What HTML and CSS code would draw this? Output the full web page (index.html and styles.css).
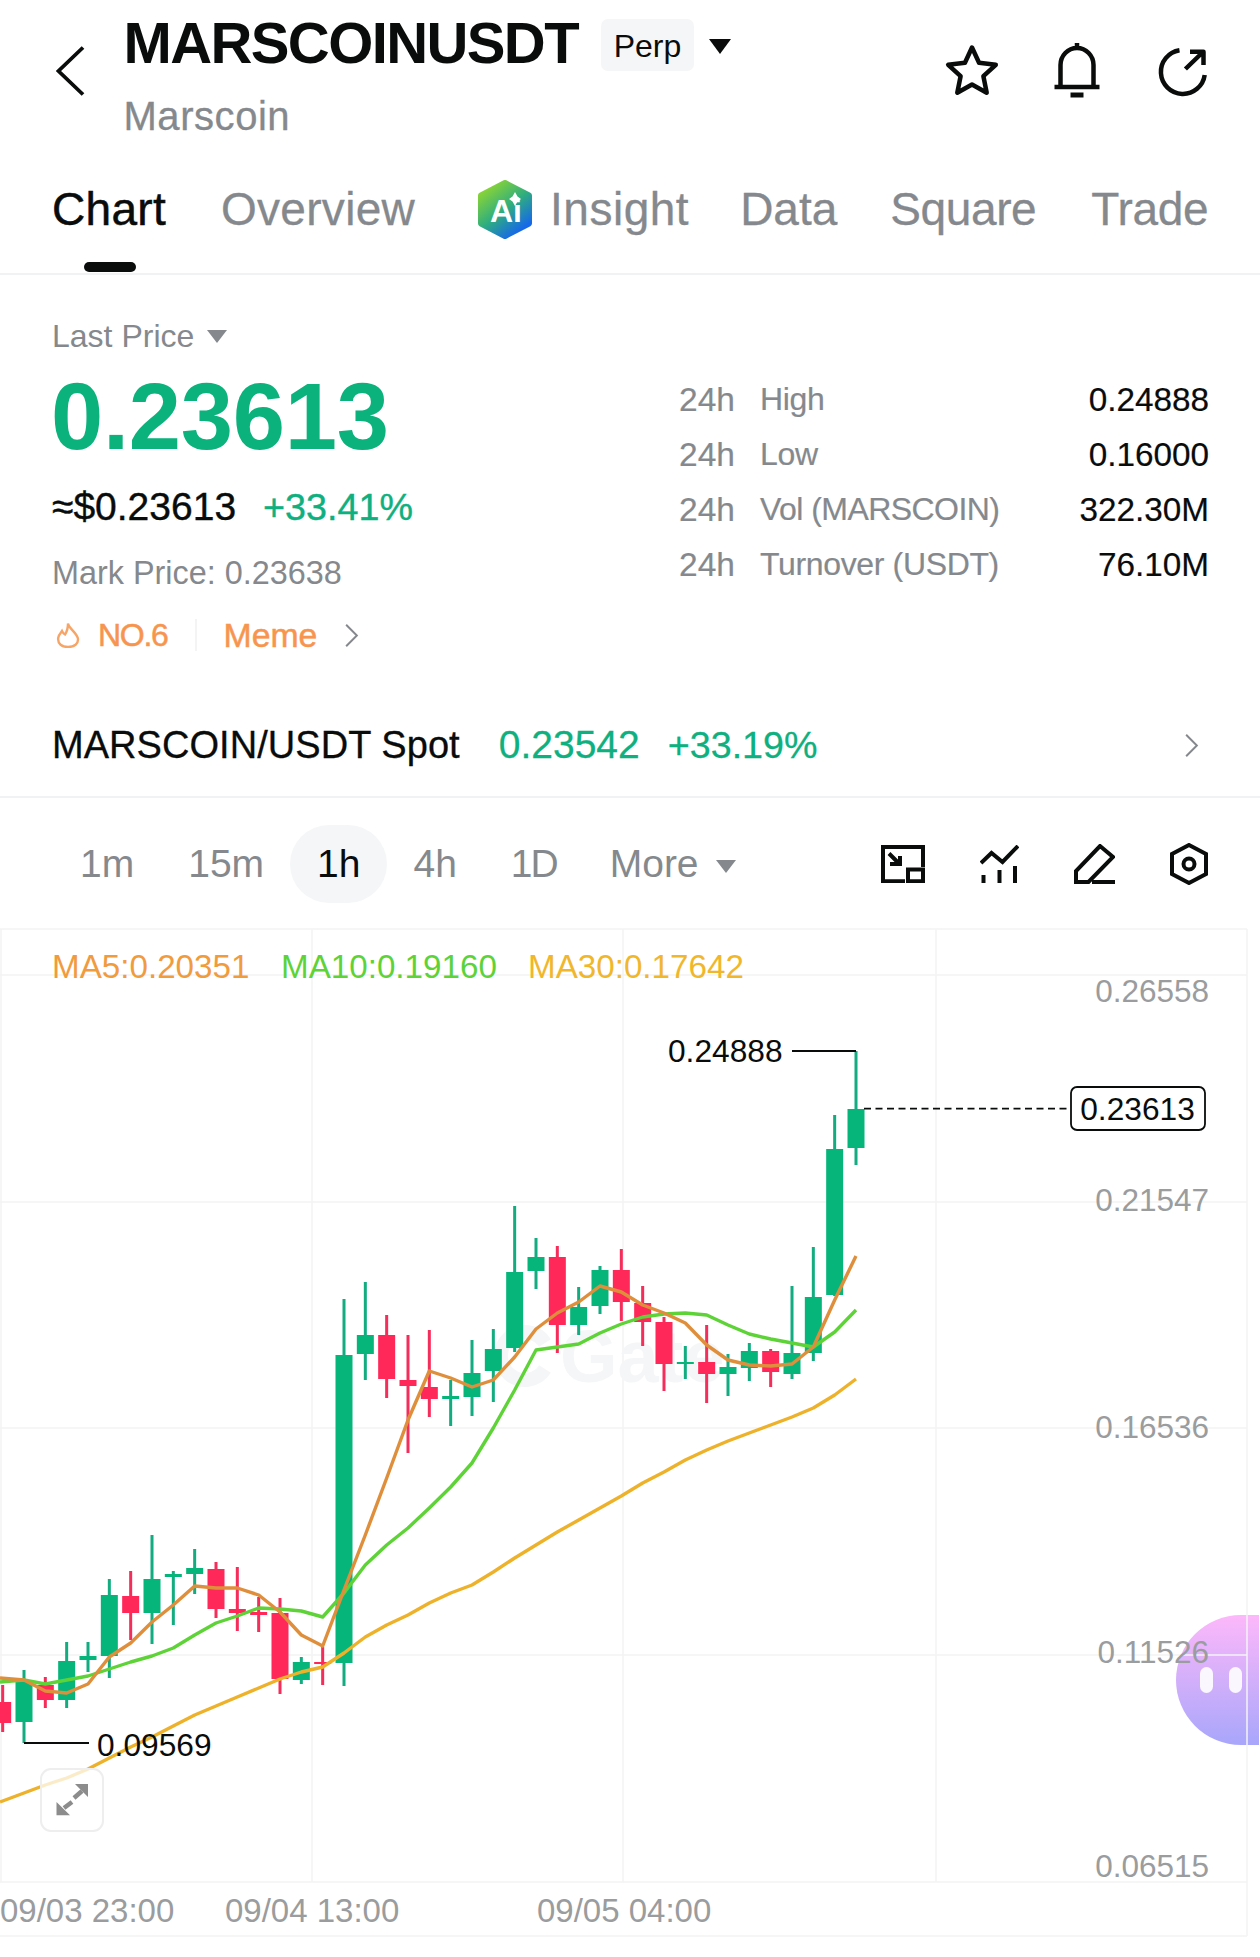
FILE: index.html
```html
<!DOCTYPE html>
<html lang="en">
<head>
<meta charset="utf-8">
<title>MARSCOINUSDT</title>
<link rel="stylesheet" href="styles.css">
</head>
<body>
<div class="page">
  <header class="header">
    <svg class="back" viewBox="0 0 30 52"><path d="M27 2.500 2.500 26 27 49.500"/></svg>
    <div class="heading">
      <div class="title-row">
        <h1 class="title">MARSCOINUSDT</h1>
        <span class="badge">Perp</span>
        <span class="tri tri-black"></span>
      </div>
      <div class="subtitle">Marscoin</div>
    </div>
    <div class="top-actions">
      <svg class="action" viewBox="0 0 60 60"><path d="M30 6.500 37.050 21.800 53.800 23.800 41.400 35.200 44.700 51.700 30 43.500 15.300 51.700 18.600 35.200 6.200 23.800 22.950 21.800Z"/></svg>
      <svg class="action" viewBox="0 0 60 60"><path d="M13.500 46V24a16.500 17 0 0 1 33 0V46M30 2V7M7.500 46h45"/><path class="thick" d="M23.500 54h13"/></svg>
      <svg class="action" viewBox="0 0 60 60"><path d="M27.500 9.200A22 22 0 1 0 52.700 34M33.400 28 51 11M38 10.700H51.500V24"/></svg>
    </div>
  </header>

  <nav class="tabs">
    <span class="tab tab-active">Chart</span>
    <span class="tab tab-overview">Overview</span>
    <span class="tab tab-ai">
      <svg class="ai-logo" viewBox="0 0 54 59">
        <defs>
          <linearGradient id="aiGrad" x1="0.150" y1="0.100" x2="0.750" y2="0.950">
            <stop offset="0" stop-color="#84d23a"/>
            <stop offset="0.500" stop-color="#2fae7e"/>
            <stop offset="1" stop-color="#1668ea"/>
          </linearGradient>
        </defs>
        <path class="ai-hex" d="M27 3 51 15.500V43.500L27 56 3 43.500V15.500Z"/>
        <text class="ai-text" x="12" y="42">Ai</text>
        <path class="ai-spark" d="M37 12 39.500 16.500 43 19 39.500 21.500 37 26 34.500 21.500 31 19 34.500 16.500Z"/>
      </svg>
      <span class="ai-label">Insight</span>
    </span>
    <span class="tab tab-data">Data</span>
    <span class="tab tab-square">Square</span>
    <span class="tab tab-trade">Trade</span>
  </nav>

  <section class="market">
    <div class="market-left">
      <div class="last-price">Last Price <span class="tri tri-gray"></span></div>
      <div class="big-price">0.23613</div>
      <div class="usd-row"><span class="usd">≈$0.23613</span><span class="pct">+33.41%</span></div>
      <div class="mark">Mark Price: 0.23638</div>
      <div class="tags">
        <svg class="flame" viewBox="0 0 24 26"><path d="M12 1.500C13 6.500 20 10 21.800 16 23 22 18 25 12 25 6 25 1.500 22 2.200 16 2.600 12.500 5 10.500 6 9 7 11 8 12 9 12.500 11 9.500 12 5.500 12 1.500Z"/></svg>
        <span class="tag-rank">NO.6</span>
        <span class="tag-divider"></span>
        <span class="tag-name">Meme</span>
        <svg class="chev tag-chev" viewBox="0 0 16 28"><path d="M2 2 14 14 2 26"/></svg>
      </div>
    </div>
    <dl class="stats">
      <div class="stat"><dt class="stat-period">24h</dt><dt class="stat-label">High</dt><dd class="stat-value">0.24888</dd></div>
      <div class="stat"><dt class="stat-period">24h</dt><dt class="stat-label">Low</dt><dd class="stat-value">0.16000</dd></div>
      <div class="stat"><dt class="stat-period">24h</dt><dt class="stat-label stat-label-vol">Vol (MARSCOIN)</dt><dd class="stat-value">322.30M</dd></div>
      <div class="stat"><dt class="stat-period">24h</dt><dt class="stat-label">Turnover (USDT)</dt><dd class="stat-value">76.10M</dd></div>
    </dl>
  </section>

  <section class="spot">
    <span class="spot-name">MARSCOIN/USDT Spot</span>
    <span class="spot-price">0.23542</span>
    <span class="spot-pct">+33.19%</span>
    <svg class="chev spot-chev" viewBox="0 0 16 28"><path d="M2 2 14 14 2 26"/></svg>
  </section>

  <section class="toolbar">
    <span class="tf">1m</span>
    <span class="tf">15m</span>
    <span class="tf tf-active">1h</span>
    <span class="tf tf-4h">4h</span>
    <span class="tf tf-1d">1D</span>
    <span class="tf tf-more">More <span class="tri tri-gray tri-more"></span></span>
    <div class="tools">
      <svg class="tool tool-a" viewBox="0 0 44 38"><path d="M24 36.200H2V2H42V22M27 24.500H42V36.200H27ZM8 8.500 18 18.500"/><path class="tool-fill" d="M9 21H21V11H17V17H9Z"/></svg>
      <svg class="tool tool-b" viewBox="0 0 39 38"><path d="M1 18 11.500 8 22.500 17 38 1M3.500 30V38M19.500 25V38M35 21V38"/></svg>
      <svg class="tool tool-c" viewBox="0 0 41 40"><path d="M26 2 39 13 14.500 38H2V27ZM18 38H41"/></svg>
      <svg class="tool tool-d" viewBox="0 0 38 42"><path d="M19 2 36 11V31L19 40 2 31V11Z"/><circle cx="19" cy="21" r="5.500"/></svg>
    </div>
  </section>

  <section class="chart">
    <svg class="chart-svg" viewBox="0 928 1260 1010">
      <path class="grid" d="M0 929H1247M0 975H1247M0 1202H1247M0 1428H1247M0 1655H1247M0 1882H1247M0 1936H1247M1 929V1882M312 929V1882M623 929V1882M936 929V1882M1247 929V1936"/>

      <g class="watermark">
        <path class="wm-arc" d="M545 1343A24 24 0 1 0 545 1369"/>
        <text class="wm-text" x="560" y="1382">Gate</text>
      </g>

      <path class="wick-up" d="M24 1670V1743M66.670 1642V1708M88 1642V1672M109.330 1579V1678M152 1535V1644M173.330 1571V1625M194.670 1549V1594M301.330 1657V1684M344 1299V1686M365.330 1282V1380M450.670 1380V1426M472 1340V1416M493.330 1329V1402M514.670 1206V1352M536 1238V1289M578.670 1287V1335M600 1266V1314M685.330 1346V1379M728 1354V1396M749.330 1343V1381M792 1286V1379M813.330 1247V1361M834.670 1115V1296M856 1051V1165"/>
      <path class="wick-down" d="M2.670 1685V1732M45.330 1677V1708M130.670 1571V1640M216 1562V1618M237.330 1567V1631M258.670 1597V1632M280 1598V1694M322.670 1647V1685M386.670 1315V1398M408 1335V1453M429.330 1330V1417M557.330 1246V1353M621.330 1249V1321M642.670 1286V1346M664 1317V1391M706.670 1325V1403M770.670 1349V1387"/>
      <path class="body-up" d="M24 1682V1722M66.670 1661V1700M88 1656V1660M109.330 1595V1656M152 1579V1613M173.330 1574V1577M194.670 1568V1574M301.330 1662V1680M344 1355V1663M365.330 1335V1354M450.670 1396V1399M472 1373V1397M493.330 1349V1371M514.670 1272V1348M536 1257V1271M578.670 1307V1325M600 1270V1306M685.330 1362V1364M728 1367V1374M749.330 1351V1368M792 1353V1374M813.330 1297V1353M834.670 1149V1295M856 1109V1148"/>
      <path class="body-down" d="M2.670 1702V1723M45.330 1685V1700M130.670 1596V1613M216 1569V1609M237.330 1609V1613M258.670 1612V1615M280 1613V1679M322.670 1662V1664M386.670 1335V1379M408 1380V1386M429.330 1387V1399M557.330 1257V1325M621.330 1270V1302M642.670 1303V1322M664 1322V1364M706.670 1362V1374M770.670 1351V1372"/>

      <path class="ma30" d="M0 1802 24 1793 45.300 1785 66.700 1778 88 1769 109.300 1758 130.700 1747 152 1737 173.300 1726 194.700 1715 216 1706 237.300 1697 258.700 1688 280 1679 301.300 1672 322.700 1667 344 1653 365.300 1637 386.700 1625 408 1615 429.300 1603 450.700 1593 472 1585 493.300 1572 514.700 1558 536 1545 557.300 1532 578.700 1520 600 1508 621.300 1496 642.700 1483 664 1472 685.300 1460 706.700 1450 728 1441 749.300 1433 770.700 1425 792 1417 813.300 1408 834.700 1395 856 1379"/>
      <path class="ma10" d="M0 1682 24 1680 45.300 1684 66.700 1680 88 1676 109.300 1669 130.700 1662 152 1656 173.300 1648 194.700 1635 216 1623 237.300 1616 258.700 1608 280 1609 301.300 1611 322.700 1617 344 1593 365.300 1565 386.700 1545 408 1528 429.300 1508 450.700 1487 472 1463 493.300 1428 514.700 1390 536 1350 557.300 1347 578.700 1344 600 1333 621.300 1324 642.700 1317 664 1314 685.300 1313 706.700 1315 728 1325 749.300 1334 770.700 1339 792 1343 813.300 1347 834.700 1332 856 1310"/>
      <path class="ma5" d="M0 1678 24 1680 45.300 1691 66.700 1693 88 1684 109.300 1657 130.700 1643 152 1622 173.300 1605 194.700 1586 216 1588 237.300 1588 258.700 1595 280 1612 301.300 1635 322.700 1646 344 1590 365.300 1535 386.700 1478 408 1420 429.300 1371 450.700 1378 472 1387 493.300 1380 514.700 1357 536 1329 557.300 1313 578.700 1302 600 1286 621.300 1292 642.700 1305 664 1313 685.300 1323 706.700 1345 728 1360 749.300 1365 770.700 1366 792 1364 813.300 1347 834.700 1300 856 1256"/>

      <text class="legend legend-5" x="52" y="978">MA5:0.20351</text>
      <text class="legend legend-10" x="281" y="978">MA10:0.19160</text>
      <text class="legend legend-30" x="528" y="978">MA30:0.17642</text>

      <text class="axis-y" x="1209" y="1002">0.26558</text>
      <text class="axis-y" x="1209" y="1211">0.21547</text>
      <text class="axis-y" x="1209" y="1438">0.16536</text>
      <text class="axis-y" x="1209" y="1663">0.11526</text>
      <text class="axis-y" x="1209" y="1877">0.06515</text>

      <text class="axis-x" x="0" y="1922">09/03 23:00</text>
      <text class="axis-x" x="225" y="1922">09/04 13:00</text>
      <text class="axis-x" x="537" y="1922">09/05 04:00</text>

      <path class="marker" d="M792 1051H856M24 1743H89"/>
      <text class="marker-text" x="668" y="1062">0.24888</text>
      <text class="marker-text" x="97" y="1756">0.09569</text>

      <path class="dash" d="M864 1108.700H1069"/>
      <rect class="price-box" x="1071" y="1087" width="134" height="43" rx="6"/>
      <text class="price-box-text" x="1137.500" y="1120">0.23613</text>
    </svg>

    <div class="expand">
      <svg class="expand-icon" viewBox="0 0 64 64"><path class="expand-head" d="M35 16H48V29ZM16.500 34V47.300H30Z"/><path class="expand-line" d="M24 40 32 34M34 30 42 23"/></svg>
    </div>

    <div class="assistant">
      <span class="eye"></span>
      <span class="eye"></span>
    </div>
  </section>
</div>
</body>
</html>
```
FILE: styles.css
```css
* { box-sizing: border-box; }

html, body {
  margin: 0;
  padding: 0;
  background: #fff;
}

body {
  font-family: "Liberation Sans", Arial, sans-serif;
  color: #000;
}

.page {
  width: 1260px;
  height: 1957px;
  overflow: hidden;
  background: #fff;
}

/* Header */
.header {
  display: flex;
  align-items: flex-start;
  height: 160px;
  padding-left: 56px;
}

.back {
  width: 30px;
  height: 52px;
  margin-top: 45px;
  flex: none;
}

.back path {
  fill: none;
  stroke: #0a0c0c;
  stroke-width: 3.800;
}

.heading {
  margin-left: 37.500px;
  flex: 1;
}

.title-row {
  display: flex;
  align-items: center;
  height: 70px;
  margin-top: 8px;
}

.title {
  margin: 0;
  font-size: 58px;
  line-height: 70px;
  font-weight: 700;
  letter-spacing: -1.600px;
  color: #0a0c0c;
}

.badge {
  display: flex;
  align-items: center;
  justify-content: center;
  width: 93px;
  height: 52px;
  margin: 4px 0 0 23px;
  padding-top: 2px;
  background: #f5f6f7;
  border-radius: 7px;
  font-size: 32px;
  color: #0a0c0c;
}

.subtitle {
  margin-top: 15px;
  font-size: 40px;
  line-height: 46px;
  letter-spacing: 0.550px;
  color: #85898d;
  -webkit-text-stroke: 0.300px currentColor;
}

.tri {
  display: inline-block;
  width: 0;
  height: 0;
  border-style: solid;
  border-color: transparent;
  border-bottom-width: 0;
}

.tri-black {
  margin: 7px 0 0 15px;
  border-width: 15px 11.500px 0;
  border-top-color: #0a0c0c;
}

.tri-gray {
  border-width: 13px 10px 0;
  border-top-color: #85898d;
}

.top-actions {
  display: flex;
  gap: 45px;
  margin-top: 41px;
  padding-right: 48px;
}

.action {
  width: 60px;
  height: 60px;
}

.action path {
  fill: none;
  stroke: #0a0c0c;
  stroke-width: 4.500;
  stroke-linejoin: round;
}

.action .thick {
  stroke-width: 5;
}

/* Tabs */
.tabs {
  display: flex;
  gap: 55px;
  padding: 22px 0 37px 52px;
  border-bottom: 2px solid #f1f2f3;
  height: 115px;
}

.tab {
  position: relative;
  display: flex;
  align-items: center;
  font-size: 46px;
  line-height: 54px;
  height: 54px;
  color: #85898d;
  -webkit-text-stroke: 0.300px currentColor;
}

.tab-active {
  color: #0a0c0c;
  letter-spacing: 0.300px;
  -webkit-text-stroke: 0.500px #0a0c0c;
}

.tab-active::after {
  content: "";
  position: absolute;
  left: 32px;
  top: 80px;
  width: 52px;
  height: 10px;
  border-radius: 5px;
  background: #0a0c0c;
}

.tab-overview {
  letter-spacing: 0.300px;
}

.tab-ai {
  margin-left: 8px;
}

.ai-logo {
  width: 54px;
  height: 59px;
  margin-right: 18px;
  flex: none;
}

.ai-label {
  letter-spacing: 0.500px;
}

.tab-data {
  margin-left: -4px;
}

.tab-square {
  margin-left: -2px;
  letter-spacing: -0.400px;
}

.tab-trade {
  letter-spacing: -0.250px;
}

.ai-hex {
  fill: url(#aiGrad);
  stroke: url(#aiGrad);
  stroke-width: 6;
  stroke-linejoin: round;
}

.ai-text {
  font-size: 32px;
  font-weight: 700;
  fill: #fff;
  stroke: none;
}

.ai-spark {
  fill: #fff;
}

/* Market */
.market {
  display: flex;
  padding: 0 51px 0 52px;
}

.market-left {
  flex: 1;
  padding-top: 41px;
}

.last-price {
  display: flex;
  align-items: center;
  gap: 13px;
  font-size: 32px;
  line-height: 40px;
  color: #85898d;
}

.big-price {
  margin: 11px 0 0 -1px;
  font-size: 94px;
  line-height: 100px;
  font-weight: 700;
  letter-spacing: -0.300px;
  color: #0cb27c;
}

.usd-row {
  display: flex;
  gap: 27px;
  margin-top: 17px;
  line-height: 46px;
  -webkit-text-stroke: 0.400px currentColor;
}

.usd {
  font-size: 39px;
  color: #0a0c0c;
}

.pct {
  font-size: 37.700px;
  color: #0fb07f;
}

.mark {
  margin-top: 23px;
  font-size: 32.400px;
  line-height: 40px;
  color: #85898d;
}

.tags {
  display: flex;
  align-items: center;
  margin-top: 22px;
  height: 40px;
  margin-left: 4px;
  font-size: 32px;
  color: #f7954f;
  -webkit-text-stroke: 0.500px currentColor;
}

.flame {
  width: 24px;
  height: 26px;
  flex: none;
}

.flame path {
  fill: none;
  stroke: #f7a467;
  stroke-width: 2.400;
}

.tag-rank {
  margin-left: 18px;
  letter-spacing: -1.300px;
}

.tag-divider {
  width: 2px;
  height: 32px;
  margin: 0 27px;
  background: #f4f4f4;
}

.tag-name {
  font-size: 33.800px;
}

.chev {
  flex: none;
}

.chev path {
  fill: none;
  stroke: #85898d;
  stroke-width: 2.200;
}

.tag-chev {
  width: 15px;
  height: 25px;
  margin-left: 27px;
}

.stats {
  width: 530px;
  margin: 97px 0 0;
}

.stat {
  display: flex;
  height: 55px;
  line-height: 55px;
  font-size: 32px;
  -webkit-text-stroke: 0.200px currentColor;
}

.stat-period {
  width: 81px;
  font-size: 33.500px;
  color: #85898d;
}

.stat-label {
  letter-spacing: -0.350px;
  color: #85898d;
}

.stat-label-vol {
  letter-spacing: -0.550px;
}

.stat-value {
  margin: 0 0 0 auto;
  font-size: 33.300px;
  color: #0a0c0c;
}

/* Spot */
.spot {
  display: flex;
  align-items: center;
  margin-top: 67px;
  padding: 0 61px 28px 52px;
  border-bottom: 2px solid #f1f2f3;
  box-sizing: content-box;
  height: 46px;
  line-height: 46px;
  -webkit-text-stroke: 0.300px currentColor;
}

.spot-name {
  font-size: 38px;
  color: #0a0c0c;
  letter-spacing: 0.050px;
}

.spot-price {
  margin-left: 39px;
  font-size: 39px;
  color: #0fb07f;
}

.spot-pct {
  margin-left: 28px;
  font-size: 37.700px;
  color: #0fb07f;
}

.spot-chev {
  width: 15px;
  height: 25px;
  margin-left: auto;
}

/* Toolbar */
.toolbar {
  display: flex;
  align-items: center;
  height: 132px;
  padding: 0 52px 0 53px;
  font-size: 39px;
  color: #85898d;
}

.tf {
  display: flex;
  align-items: center;
  height: 78px;
  padding: 0 27px;
  border-radius: 39px;
}

.tf-active {
  margin-left: -1px;
  background: #f5f6f7;
  color: #0a0c0c;
}

.tf-4h {
  margin-left: -1px;
}

.tf-1d {
  letter-spacing: -2px;
}

.tf-more {
  gap: 17px;
  margin-left: -1px;
}

.tri-more {
  margin-top: 4px;
}

.tools {
  display: flex;
  align-items: center;
  gap: 55px;
  margin-left: auto;
}

.tool path,
.tool circle {
  fill: none;
  stroke: #0a0c0c;
  stroke-width: 4;
}

.tool path.tool-fill {
  fill: #0a0c0c;
  stroke: none;
}

.tool-a { width: 44px; height: 38px; }
.tool-b { width: 39px; height: 38px; }
.tool-c { width: 41px; height: 40px; }
.tool-d { width: 38px; height: 42px; }

/* Chart */
.chart {
  position: relative;
  height: 1010px;
  margin-top: -2px;
}

.chart-svg {
  position: relative;
  z-index: 1;
  display: block;
  width: 1260px;
  height: 1010px;
  font-family: "Liberation Sans", Arial, sans-serif;
}

.grid {
  fill: none;
  stroke: #f3f4f5;
  stroke-width: 1.500;
}

.wm-arc {
  fill: none;
  stroke: #f5f6f7;
  stroke-width: 14;
}

.wm-text {
  font-size: 74px;
  font-weight: 700;
  fill: #f5f6f7;
}

.wick-up,
.wick-down {
  fill: none;
  stroke-width: 3;
}

.wick-up { stroke: #13ab80; }
.wick-down { stroke: #f42d5b; }

.body-up,
.body-down {
  fill: none;
  stroke-width: 17;
}

.body-up { stroke: #06b57a; }
.body-down { stroke: #ff2858; }

.ma5,
.ma10,
.ma30 {
  fill: none;
  stroke-width: 3.400;
  stroke-linejoin: round;
}

.ma5 { stroke: #df8f3b; }
.ma10 { stroke: #5ed337; }
.ma30 { stroke: #eeb22a; }

.legend {
  font-size: 33.200px;
}

.legend-5 { fill: #f19b3f; }
.legend-10 { fill: #5ed337; }
.legend-30 { fill: #f1b72c; }

.axis-y {
  font-size: 31.500px;
  text-anchor: end;
  fill: #9a9c9e;
}

.axis-x {
  font-size: 33px;
  fill: #9a9c9e;
}

.marker {
  fill: none;
  stroke: #0a0c0c;
  stroke-width: 1.800;
}

.marker-text {
  font-size: 31.700px;
  fill: #0a0c0c;
}

.dash {
  fill: none;
  stroke: #0a0c0c;
  stroke-width: 1.800;
  stroke-dasharray: 7 4.500;
}

.price-box {
  fill: #fff;
  stroke: #0a0c0c;
  stroke-width: 1.800;
}

.price-box-text {
  font-size: 31.700px;
  text-anchor: middle;
  fill: #0a0c0c;
}

.expand {
  position: absolute;
  z-index: 2;
  left: 40px;
  top: 840px;
  width: 64px;
  height: 64px;
  border: 2.500px solid #eeeeee;
  border-radius: 11px;
  background: rgba(255, 255, 255, 0.75);
}

.expand-icon {
  display: block;
  width: 64px;
  height: 64px;
  margin: -2.500px;
}

.expand-head {
  fill: #8c8c8c;
}

.expand-line {
  fill: none;
  stroke: #8c8c8c;
  stroke-width: 4.500;
}

.assistant {
  position: absolute;
  z-index: 0;
  left: 1176px;
  top: 687px;
  display: flex;
  align-items: center;
  gap: 16px;
  width: 83px;
  height: 130px;
  padding: 0 0 0 24px;
  border-radius: 65px 0 0 65px;
  background: linear-gradient(180deg, #fdb8fa 0%, #a8a6fb 100%);
}

.eye {
  width: 13px;
  height: 26px;
  border-radius: 7px;
  background: #fff;
  opacity: 0.9;
}
```
